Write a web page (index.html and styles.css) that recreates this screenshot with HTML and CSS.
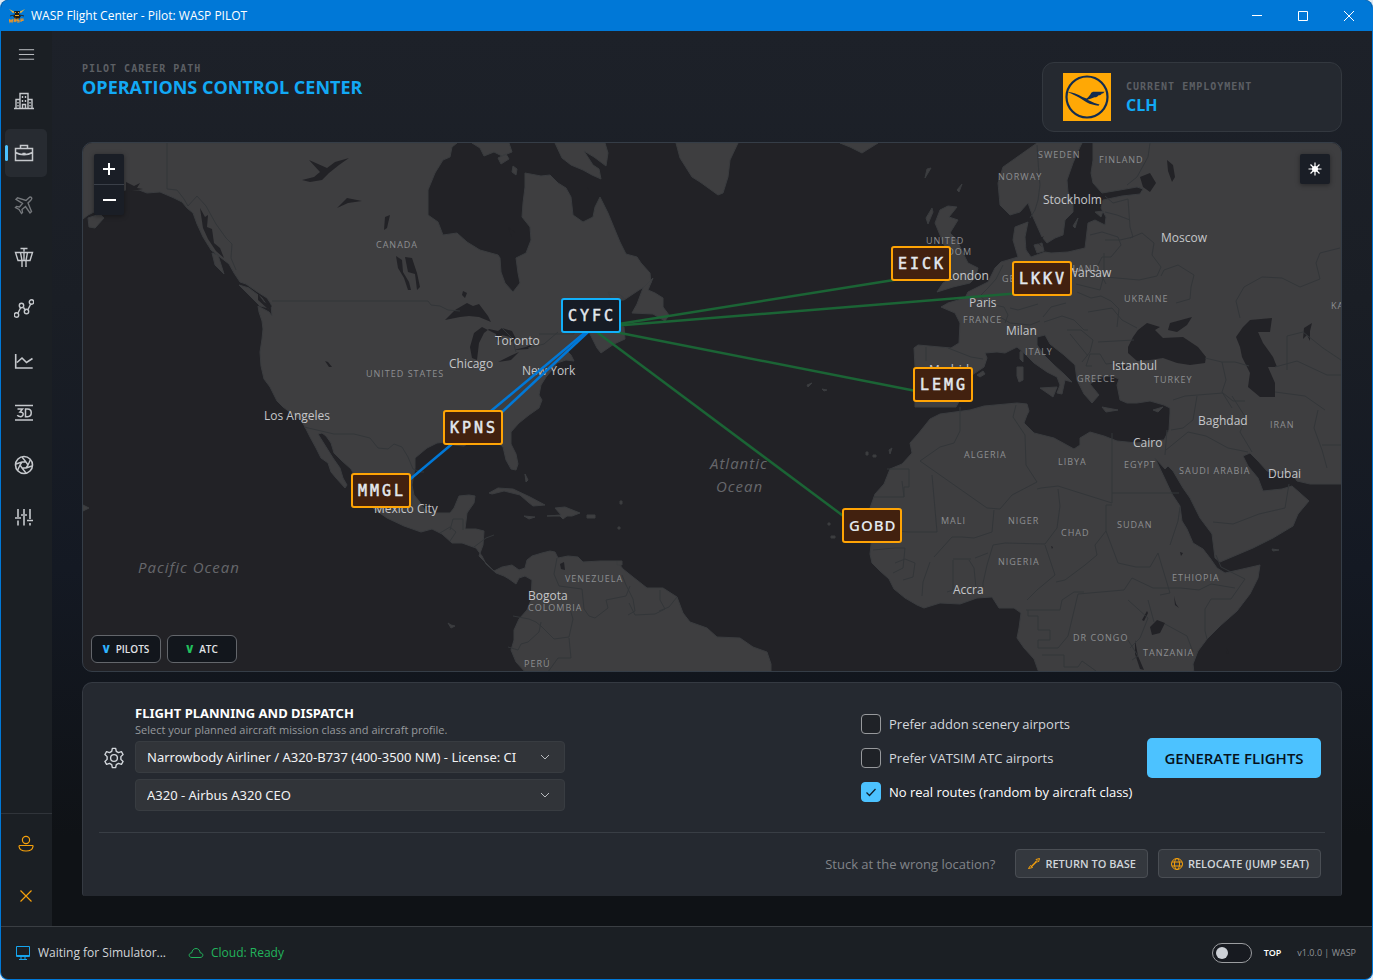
FILE: index.html
```html
<!DOCTYPE html>
<html lang="en">
<head>
<meta charset="utf-8">
<title>WASP Flight Center - Pilot: WASP PILOT</title>
<link rel="stylesheet" href="styles.css">
</head>
<body>
<div class="window">
  <header class="titlebar">
    <svg class="app-logo" viewBox="0 0 16 16" aria-hidden="true">
      <path d="M0 1l6 3-2 1zM16 1l-6 3 2 1z" fill="#f0b840"/>
      <path d="M5 3h6l-1 3 2 2-2 3H6L4 8l2-2z" fill="#1b1a18"/>
      <path d="M6 4h1v1H6zM9 4h1v1H9zM6 7h4v1H6z" fill="#f5a81c"/>
      <path d="M1 8l4-1M15 8l-4-1" stroke="#2b2a28"/>
      <path d="M0 11l1 3 1-2 1 2 1-3M5 14l1-3 1 3M10 11H8v1.500h2V14H8M12 14v-3h2v1.500h-2" fill="none" stroke="#e8952a" stroke-width="1.200"/>
    </svg>
    <span class="window-title">WASP Flight Center - Pilot: WASP PILOT</span>
    <div class="window-controls">
      <button type="button" aria-label="Minimize"><svg viewBox="0 0 10 10"><path d="M0 4.500h10"/></svg></button>
      <button type="button" aria-label="Maximize"><svg viewBox="0 0 10 10"><path d="M.5.5h9v9h-9z"/></svg></button>
      <button type="button" aria-label="Close"><svg viewBox="0 0 10 10"><path d="M0 0l10 10M10 0L0 10"/></svg></button>
    </div>
  </header>

  <div class="body">
    <nav class="sidebar" aria-label="Main">
      <button type="button" class="menu" aria-label="Menu"><svg viewBox="0 0 20 20"><path d="M2 5.500h16M2 10.500h16M2 15.500h16"/></svg></button>
      <button type="button" class="nav-item" aria-label="Company"><svg viewBox="0 0 20 20"><path d="M0 17.500h20M2 17V8.500h4M18 17V8.500h-4M6 17V2.500h8V17M8.500 17v-3.500h3V17M8.500 5v2M11.500 5v2M8.500 9v2M11.500 9v2M4 11v1.500M4 14v1.500M16 11v1.500M16 14v1.500"/></svg></button>
      <button type="button" class="nav-item active" aria-label="Career"><svg viewBox="0 0 20 20"><path d="M1.500 5.500h17v12h-17zM6.500 5.500v-3h7v3M1.500 9.500c5 3 12 3 17 0M8.500 10.500h3" stroke-width="1.500"/></svg></button>
      <button type="button" class="nav-item dim" aria-label="Flight"><svg viewBox="0 0 20 20"><path d="M17.500 2.500c-1-.8-2-.4-2.800.4L12 5.500 3.500 2.800 2 4.300 8.500 8.500 5.500 12l-3-.6L1.500 12.500 5 14.500l2.500 4 1-1-.5-3 3.500-3 4.500 6.500 1.500-1.500L14 8l2.800-2.700c.8-.8 1.400-1.900.7-2.800z"/></svg></button>
      <button type="button" class="nav-item" aria-label="Tower"><svg viewBox="0 0 20 20"><path d="M6.500 1.500h7M10 1.500v3M1.500 5.500h17L16 13.500H4zM6.500 5.500l1.500 8M13.500 5.500l-1.500 8M10 5.500v8M8 13.500V20M12 13.500V20"/></svg></button>
      <button type="button" class="nav-item" aria-label="Routes"><svg viewBox="0 0 20 20"><path d="M4 14l3-6M9.500 8.500l2 3M14 10.500l3-6"/><circle cx="2.500" cy="16" r="2.200"/><circle cx="7.500" cy="6.500" r="2.200"/><circle cx="12.500" cy="12.500" r="2.200"/><circle cx="17.500" cy="3" r="2.200"/></svg></button>
      <button type="button" class="nav-item" aria-label="Statistics"><svg viewBox="0 0 20 20"><path d="M1.700 3v14h17M3 11.500l5-4.500 4.500 4.500 6-4" stroke-width="1.600"/></svg></button>
      <button type="button" class="nav-item" aria-label="3D view"><svg viewBox="0 0 20 20"><path d="M1 2.500h18M1 17h18M3.500 6h5L6 9c5 0 3.500 5-.2 4.600C4.500 13.600 3.800 13 3.400 12M11.500 6h2c5 0 5 7.700 0 7.700h-2z" stroke-width="1.500"/></svg></button>
      <button type="button" class="nav-item" aria-label="Camera"><svg viewBox="0 0 20 20"><circle cx="10" cy="10" r="8.500" stroke-width="1.600"/><path d="M8 7h4l2 3-2 3H8l-2-3zM12 7L8 2M14 10l2.500-5.500M12 13l6-2M8 13l4 5M6 10l-2.500 5.500M8 7L2 9" stroke-width="1.400"/></svg></button>
      <button type="button" class="nav-item" aria-label="Settings"><svg viewBox="0 0 20 20"><path d="M4 2v8M1 11h6M4 13.500v5M10 2v5M7 8h6M10 9v9.500M16 2v10M13 13.500h6M16 16v2.500" stroke-width="1.600"/></svg></button>
      <div class="nav-bottom">
        <button type="button" class="nav-item accent" aria-label="Account"><svg viewBox="0 0 20 20"><circle cx="10" cy="6" r="3.600"/><path d="M3.500 11.500h13c.5 0 .6.5.5 1-.4 3-3 4.500-7 4.500s-6.600-1.500-7-4.500c0-.5 0-1 .5-1z"/></svg></button>
        <button type="button" class="nav-item accent" aria-label="Exit"><svg viewBox="0 0 20 20"><path d="M4.500 4.500l11 11M15.500 4.500l-11 11"/></svg></button>
      </div>
    </nav>

    <main class="main">
      <div class="page-head">
        <div class="heading">
          <p class="eyebrow">PILOT CAREER PATH</p>
          <h1>OPERATIONS CONTROL CENTER</h1>
        </div>
        <section class="employment">
          <svg class="airline" viewBox="0 0 48 48" role="img" aria-label="Airline logo">
            <path fill="#ffa805" d="M0 0h48v48H0z"/>
            <circle cx="24" cy="24" r="20.500" fill="none" stroke="#122c50" stroke-width="2.200"/>
            <path fill="#122c50" d="M5.500 19c4 .5 9 2 14 5l4 1.500c2-1 3.500-3.500 4.500-5.200.7-1 1.500-1.500 3-1.500h10.500l-1.500 1.700h-2l1 .3-2 1.500h-2l.5.500-2.500 1.400h-1.500l-4 1.500-3 1 7 3.300 5 1.500-1 1.300c-4-.4-8.500-1.700-11.500-3.300-3-1.500-5-3.500-8-5-4-2-7-3.800-10.500-5z"/>
          </svg>
          <div>
            <p class="eyebrow">CURRENT EMPLOYMENT</p>
            <p class="company">CLH</p>
          </div>
        </section>
      </div>

      <section class="map" aria-label="Route map">
        <svg class="map-canvas" viewBox="83 143 1258 528" preserveAspectRatio="xMidYMid slice">
          <g class="land">
            <path d="M83 143V219l5-4 6-3V208l31-18 14 0 8 3 13-1 14 6 8 4 5 6 6 5 4 11 6 13 8 13 9 7 9 7 5 9 6 9 6 2 10 7 11 7 4 6 1 12-3-4-11-6 1 6 3 9 1 8-1 10-2 13 1 14 3 13 6 8 5 10 2 4 6 6 8 6 10 7 4 7 5 10 6 11 5 10 7 5 3 9 5 6 9 10 2-3-4-7-3-10-7-10-5-8-5-8-5-8 4-1 4 3 5 7 3 10 8 8 9 8 10 19 5 10 8 11 13 9 17 8 17 6 11-3 10 5 10 9 10 0 14 5 6 8 4 8 10 9 8 3 5 3 7 5 3-6 6-2 7 4-1 20-4 10-8 9-5 11 0 10-3 10 5 12 10 11H771V664l-4-12-14-5-13-9-23-1-10-9-17-6-7-9-6-16-14-9h-16l-14-11-10-8-6-8h-17l-17 1-5-5-10-1-10 2-3-6-5-1-8 2-10 3-5 4-2 8-6 2-7-5-10 2-8 4-7-7-8-8 4-11 1-14-8-2H465l2-16 7-10 1-7-6-1-10 1-5 12-4 5H435l-10-3-6-9-5-6-2-10 3-17v-10l12-10 10-5 9-1 8 3 10 1 5-3 28-1 6 5 3 13 5 9 5 1 2-6-2-10-5-10V432l8-9 10-8 10-7 3-8-3-5 2-10 5-8 6-7 5-7 9-3 8 1-3-6-4-4 7-9 7-5 8-5 4 8 4 8 4 5 13-9 11-5-1-12-16-3-16-6-3-8 1-8 34-2 15-10 12-7-1-10-9-10-4-6-11-3-6-12-5-12-7-17-8-16-5 10-2 10-10 5-10-7-2-18-5-9-8-5-8-8-9 1-16-3 0 14-2 16-1 14 8 10 1 13-5 13-10 5 2 15 2 10-7 9-8-9-4-11-1-14-2-3-18-5-13-8-10-9-14 2-5-13-10-7V190l7-17 8-13 7-3 2-10 5-4z"/>
            <path d="M212 253l6 2 6 19-9-9zM239 285l10 3 13 10 7 10-9-2-11-11zM88 218l12-4 4 4-9 10-6-1zM555 143l7 15 9 7 12 5 9 5 9 4-2-10-6-4-9-14 10 6 8 6 4 3 2-13-3-10zM472 143l8 5 4 8 10-4 8 4 10-4-3-9zM498 158l8-4 3 5-8 5zM513 166l4 3-1 6-4-3zM653 278l-5 12 7 3 8 5v9l6 8-4 6-12-7-21-1 5-9 6-16zM608 292l12 3 5 4-13 1zM676 143l4 15 12 19 8 5 18 13 5-2 5-16 2-17 8-17zM840 143l10 4 12 6 16-10z"/>
            <path d="M489 493l9-5 15 1 17 8 15 8-12 1-5-4-8-7-16-4-12 3zM547 516l14-1-6-7 10-1 15 6-8 3-5 0-4 3-3-3zM524 516l11 1-6 2zM587 515h8v3h-8zM525 474l3 6-2 2zM83 505l6 3-6 3zM620 501h2v3h-2zM618 527h2v2h-2zM617 561h5v4h-5zM448 623l3 2 4 1-4 2zM807 385l5-2-4 4zM822 389l5 1-3 1zM866 452h2v3h-2zM873 455h3v2h-3zM889 450l3-2-2 6zM828 523h2v2h-2zM831 536h4v2h-4z"/>
            <path d="M1037 143l-17 12-17 12-5 16 2 22 10 10 10-3 8-9 5 14 9 20 5 6 8-5 8-3 2-15 8-8v-9l-5-11-1-12 6-17 7-16 2-4z"/>
            <path d="M935 223l5-13 8-4 9 1-8 10 9 3-8 13 7 7 6 13 5 10 10 5-3 10-5 5-17 4-16 5 6-9 8-5-5-9-3-10 2-12zM926 218l6-10 1 4-5 12zM931 168l-6 10 2-9zM962 184l-3 8-2-2z"/>
            <path d="M1017 367l6 0 0 13-4 2-2-6zM1020 352l3-2 0 12-3-3zM1040 388l17-1-4 10zM1102 407l16 3-12 2zM1153 410l10-3-5 5zM1034 245l8-2 2 8-7 2zM1073 226l5-8-3 10zM1095 212l8-1-2 6zM977 375l6-4 2 3-5 3zM1272 549l7 1-6 1z"/>
            <path d="M1341 143H1093v17l-2 13 2 10 9 10 18-3 17-3 6 2-3 5-18 2-19 4-2 8 5 9-1 8-10-5-7 3-2 17-1 8-17 4-17 1-6-1-14 5-5-7-1-13 3-15-13 5-2 13 5 17-17 5-6 6-7 14-10 5-10 5-3 6-17 5-7 4 14 6 5 10-1 20-8 5-33-3-4 3 1 19v40l16 0 25 0 14-25 2-7 12-8 3-9-2-5 12-1 8 1 12-6 7 6 10 10 13 9 10 5 3 8-3 8 5 1 3-14 7 2-8-8-10-9-10-10-7-10v-8l8-2 5 9 14 11 11 10 2 15 7 14 8 9 7-8-9-11 10-7 12-1 7 3-2 6 3 15 7 3h10l13-2 14 4 6 3v5l-1 17-5 10-14 1-13 2-20-2-13-5-14-4-10 6v7l-6 4-20-11-20-5-10-10 3-8 2-4-2-7-10-1-33 3-14 4-30 4-10 5-12 15-8 9 2 10-10 11-12 5-6 15-9 10-5 14 4 10-4 36 2 9 8 8 9 8 5 10 11 9 12 7 7 3 16-5 20 1 17-6 15-1 7 11h15l7 5-2 15-2 10 7 10 10 11 5 14 3 9H1195l-2-18 5-13 9-12 13-13 17-15 13-17 8-16 2-13-13 3-22 5-8-5-7-10-7-9-10-6-6-14-5-8-2-15-8-12-7-15-10-21 10 11 3-3 5 5 10 17 7 10 10 20 12 16 3 24 5 4 33-14 20-10 20-12 5-12 11-13-9-8-8-7-10 3-19 2-5-13-10-12-5-10 7-3 8 8 9 10 16 3 9-1 5 8 13 3h31z"/>
          </g>
          <g class="water">
            <path d="M302 180l12-3 6-5-11-12 18 8 8-6 14-4-10 7-10 8-7 7-12 2zM337 208l10-10 15 3-14 2zM384 230l1-13 5-2-3 13zM405 257l7 1 5 15 3 14-3 3-2-16-7-2zM396 256l6 4 1 12 6 10 2 8-3 0-4-12-6-10zM463 291l4 2-2 5-3-3zM445 320l10-10 12-7 6 3 6-2 9 12 3 6-12-5-10-1-9 1zM482 327l-8 6-4 14 2 11 5 2 2-17 5-10 5-4 9 2 4-3 10 3 4 8-6 4 0-6-8-2-4 9-2-10zM498 362l12-6 9-4-8 8zM514 350l12-3 8-4-6 6zM325 361l3 1 4 5-3 0zM560 564l4-2 1 8-4-1zM587 187l2 3-2 2zM508 227l8 6-4 4z"/>
            <path d="M1128 353v-6l5-10 5-7 9-7 13 4-5 3 8 8 20-1 15 10 8 10-1 6-15 2-13-2-14-5-13 2-13 1zM1168 330l2-7 22-6-5 8-10 7zM1250 320l22-2-2 14-12 0 5 11 10 14 4 10-9 0 7 16v14h-15l-12-10 2-14-8-16-2-10-4-10 7-10zM1140 177l10-4 6 10-6 9-7-5zM1167 160l6 5 2 12-3 5-4-11zM1304 328l8-5-2 8 0 10-3-6-4 4zM1117 366l7-1 5 2-8 2zM1150 627l7-7 8 3-5 10-8 2zM1135 640l3 16 6 14-4-1-5-15zM1142 620l5-9 1 2-4 8zM1174 596l2 8 3 4-4-3zM1180 552l3 1-2 3zM1051 546l2 1-1 2zM1226 647l3 6-2 1z"/>
            <path d="M200 208l5 9 3-2-1 12 5 2 2 14 6 5 4 10-8-7-8-12-5-11zM258 294l6 8 8 4-4 3-10-9zM126 182l8 4 6-3-3 5 6 1-17 3zM1026 247l6-2-2 5zM1044 236l-5 7 3 4-6-6z"/>
          </g>
          <g class="borders">
            <path d="M167 143v46l10 1 7 9 4 7 9-10 9 10 10 18 10 14 6 6-1 14 5 12M272 301H428l3 4 9 1 8 4 12 1M502 328l10 10 4 14M528 348l16-4 14-12M539 334h35l1-6M304 427l30 7h20l16 4 8 10 10 1 6-5 8 3 6 10 5 12 8 3 3 0M450 530l3-11h10v11M440 533l10-6 6 5-6 9M474 547l12-9 8-3M557 558l-3 16 5 12 23 3 2 20 5 7 6 2 13-10-2-8 20-4 4-10M622 575l4 10 7 14 2 12-7 4M660 590v10l5 9-10 5-20 1-6-12M677 597l-8 10-10 4M513 616l16 3 7 3 6 5 12 12 15-2 4-18-3-10M541 622l-2 10-11 10-7 2-3 6-10-3M569 638l2 20-13 0-10 14"/>
            <path d="M1037 145l2 30 1 10-2 15-3 10-5 8M1150 143l-2 14-11 20-10 8M1105 196l8 7 15-4 2 28 3 10-13 3-15 0M1105 212l12 3 13 5M1090 235l12-3 16 5 3 8-10 12-9 0-5 10 9 17M1130 238l12-5 12 10-2 12 9 12-4 9-18 4-22-2-12-1M1161 276l3-6 14-5 16 10-3 12-1 12-14 4M1104 253v22l-4 15-24-6M1077 292l14 6 10-2 10 5 8 8-2 18M1072 290l-19-4M1052 262l-5 18M1003 265l-7 14-8 9-8 8 9 8 15 3 4 8-3 8M1000 317l10 6 20 2 10-4M1010 308l8 2 20-6M1066 303l-15 4-8 10M1044 322l18-6 12 4 10 10 4 0M1088 312l24-4 10 12 15 8M1067 330l14 0 12 10-3 12-8 10M1070 334l18 22M1098 342l36-2M1090 354h10l6 10 18-2M1090 354l-4 12 6 0M983 359l-12-2-23-9M926 347l0 14M1240 318l-4-17 8-14 18-10 20 1 18 9 20-8-4-16 4-10 20-5M1205 358l17 4 13 0 14 4M1222 362l4 18-4 12 10 16M1173 400l12-4 38-3 10 8 12 0M1287 370v-34l16-4 20 16 18 12M1275 367l22-6 30 14 14 0M1275 392l30 4 20 14M1232 396l14 22-6 14 12 20M1171 430l12-2 10-8 4-24M1166 450l22-18 18 4 22 12 20 4M1318 410l-4 18 8 22 5 18M1322 445h19M1167 430l-2 25"/>
            <path d="M920 461l20-14 14-4 6-12 0-24M1016 405l-3 12 12 18 1 30 11 17-25 13-12 14-13-1-67-47M887 469h22v18h-5v10h-30M904 497l-2-16M932 475l5 57h-29l-34-3M1112 433v70l-54-17-17 2-4 1M1112 493h67M1112 505h-6v26l-11 14 2 10-12 10-20 15-9 2M1058 489l2 17-3 22-12 16M1045 544l-40-1-12 2-6 20-4 18v4M994 510l-2 22-18 6-12-1-10 0-18 20M873 550l22-2 10 0-2 20-10 5M895 563l10-4 10 4-2 14-10 3M930 562l-7 20-1 14M953 560v30l-6 2M969 560l5 8 2 20M953 559h18M975 558l13-5M1045 545l10 30-18 15-10 10M1026 610h34l2-10 12-8 10 0M1028 610v6h10v14h12v10h-12v8h20l10-12 10-42 46-4 8-12 21 10h28l18 2 12-6 24 4M1106 531l12 32 18 4 14 0 8-14 6 20 6 20-10 2M1170 545l8-24 2-14M1216 555l5 12 24 12-14 20-20 0-6 10v22l2 8M1148 600l6 22M1128 600l20 18-8 20-10 10M1165 624l22 12 6 16M1128 640l10 16-6 4M1042 655h22v12h14l4-6 14 10M1213 522l20 2 26-10 26-6 4-24"/>
          </g>
          <g class="country">
            <text x="376" y="248">CANADA</text><text x="366" y="377">UNITED STATES</text><text x="565" y="582">VENEZUELA</text><text x="528" y="611">COLOMBIA</text><text x="524" y="667">PERÚ</text>
            <text x="1038" y="158">SWEDEN</text><text x="1099" y="163">FINLAND</text><text x="998" y="180">NORWAY</text><text x="926" y="244">UNITED</text><text x="922" y="255">KINGDOM</text><text x="1002" y="282">GERMANY</text><text x="1058" y="272">POLAND</text><text x="1124" y="302">UKRAINE</text><text x="963" y="323">FRANCE</text><text x="1025" y="355">ITALY</text><text x="1077" y="382">GREECE</text><text x="1154" y="383">TURKEY</text><text x="1331" y="309">KAZAKHSTAN</text><text x="1270" y="428">IRAN</text><text x="964" y="458">ALGERIA</text><text x="1058" y="465">LIBYA</text><text x="1124" y="468">EGYPT</text><text x="1179" y="474">SAUDI ARABIA</text><text x="941" y="524">MALI</text><text x="1008" y="524">NIGER</text><text x="1061" y="536">CHAD</text><text x="1117" y="528">SUDAN</text><text x="998" y="565">NIGERIA</text><text x="1172" y="581">ETHIOPIA</text><text x="1073" y="641">DR CONGO</text><text x="1143" y="656">TANZANIA</text>
          </g>
          <g class="city">
            <text x="495" y="345">Toronto</text><text x="449" y="368">Chicago</text><text x="522" y="375">New York</text><text x="264" y="420">Los Angeles</text><text x="374" y="513">Mexico City</text><text x="528" y="600">Bogota</text><text x="1043" y="204">Stockholm</text><text x="1161" y="242">Moscow</text><text x="946" y="280">London</text><text x="1067" y="277">Warsaw</text><text x="969" y="307">Paris</text><text x="1006" y="335">Milan</text><text x="1112" y="370">Istanbul</text><text x="929" y="374">Madrid</text><text x="1198" y="425">Baghdad</text><text x="1133" y="447">Cairo</text><text x="1268" y="478">Dubai</text><text x="953" y="594">Accra</text>
          </g>
          <g class="ocean"><text x="138" y="573">Pacific Ocean</text><text x="710" y="469">Atlantic</text><text x="716" y="492">Ocean</text></g>
          <g class="routes"><path d="M600 327L900 279"/><path d="M600 327L1020 293"/><path d="M600 329L916 391"/><path d="M590 327L846 518"/></g>
          <g class="routes return"><path d="M588 330L491 411"/><path d="M588 332L501 413"/><path d="M452 444L408 481"/></g>
          <g class="marker home"><rect x="562" y="299" width="58" height="33" rx="2"/><text x="568" y="321">CYFC</text></g>
          <g class="marker"><rect x="444" y="411" width="58" height="33" rx="2"/><text x="450" y="433">KPNS</text></g>
          <g class="marker"><rect x="352" y="474" width="58" height="33" rx="2"/><text x="358" y="496">MMGL</text></g>
          <g class="marker"><rect x="892" y="247" width="58" height="33" rx="2"/><text x="898" y="269">EICK</text></g>
          <g class="marker"><rect x="1013" y="262" width="58" height="33" rx="2"/><text x="1019" y="284">LKKV</text></g>
          <g class="marker"><rect x="914" y="368" width="58" height="33" rx="2"/><text x="920" y="390">LEMG</text></g>
          <g class="marker sans"><rect x="843" y="509" width="58" height="33" rx="2"/><text x="849" y="531">GOBD</text></g>
        </svg>
        <div class="zoom">
          <button type="button" aria-label="Zoom in"><svg viewBox="0 0 14 14"><path d="M1 7h12M7 1v12"/></svg></button>
          <button type="button" aria-label="Zoom out"><svg viewBox="0 0 14 14"><path d="M1 7h13"/></svg></button>
        </div>
        <button type="button" class="theme" aria-label="Map theme"><svg viewBox="0 0 14 14"><circle cx="7" cy="7" r="3" fill="currentColor" stroke="none"/><path d="M7 0.500v13M.5 7h13M2.500 2.500l9 9M11.500 2.500l-9 9" stroke-width="1.200"/></svg></button>
        <div class="layers">
          <button type="button"><b class="v-pilots">V</b>PILOTS</button>
          <button type="button"><b class="v-atc">V</b>ATC</button>
        </div>
      </section>

      <section class="panel">
        <div class="planning">
          <svg class="gear" viewBox="0 0 24 24" aria-hidden="true"><circle cx="12" cy="12" r="3.700"/><path d="M10.200 1.500h3.600l.7 3.200 2.400 1.400 3.200-1 1.800 3.100-2.400 2.300v3l2.400 2.300-1.800 3.100-3.200-1-2.400 1.400-.7 3.200h-3.600l-.7-3.200-2.400-1.400-3.200 1-1.800-3.100 2.400-2.300v-3L2.100 8.200l1.800-3.100 3.200 1 2.400-1.400z"/></svg>
          <div class="profile">
            <h2>FLIGHT PLANNING AND DISPATCH</h2>
            <p class="hint">Select your planned aircraft mission class and aircraft profile.</p>
            <div class="select"><select aria-label="Mission class"><option>Narrowbody Airliner / A320-B737 (400-3500 NM) - License: CI</option></select><svg viewBox="0 0 10 10"><path d="M1 3l4 4 4-4"/></svg></div>
            <div class="select"><select aria-label="Aircraft profile"><option>A320 - Airbus A320 CEO</option></select><svg viewBox="0 0 10 10"><path d="M1 3l4 4 4-4"/></svg></div>
          </div>
          <div class="checks">
            <label><input type="checkbox"><span>Prefer addon scenery airports</span></label>
            <label><input type="checkbox"><span>Prefer VATSIM ATC airports</span></label>
            <label class="on"><input type="checkbox" checked><span>No real routes (random by aircraft class)</span><svg class="tick" viewBox="0 0 12 12"><path d="M1.500 6.500l3 3 6-6.500"/></svg></label>
          </div>
          <button type="button" class="generate">GENERATE FLIGHTS</button>
        </div>
        <div class="stuck">
          <span>Stuck at the wrong location?</span>
          <button type="button" class="secondary"><svg viewBox="0 0 14 14"><path d="M4.500 9.500l5-5" stroke-width="1.400"/><path d="M1.500 11.500l2-3 2 2zM9 2.500l3.500-1L11.500 5zM8.500 4l1.500 1.500"/></svg>RETURN TO BASE</button>
          <button type="button" class="secondary"><svg viewBox="0 0 14 14"><circle cx="7" cy="7" r="5.500"/><ellipse cx="7" cy="7" rx="2.500" ry="5.500"/><path d="M2 5h10M2 9h10"/></svg>RELOCATE (JUMP SEAT)</button>
        </div>
      </section>
    </main>
  </div>

  <footer class="status">
    <span class="sim"><svg viewBox="0 0 16 16"><path d="M1.500 1.500h13v10h-13zM1.500 10.500h13M6 12v2.500M10 12v2.500M4 14.500h8"/></svg>Waiting for Simulator...</span>
    <span class="cloud"><svg viewBox="0 0 16 16"><path d="M4 12.500C1.800 12.500 1 11 1.200 9.800 1.400 8.600 2.400 7.900 3.800 7.800 4 5.200 5.800 3.500 8 3.500s4 1.700 4.200 4.300c1.400.1 2.400.8 2.600 2 .2 1.200-.6 2.700-2.800 2.700z"/></svg>Cloud: Ready</span>
    <label class="top"><input type="checkbox" role="switch">TOP</label>
    <span class="version">v1.0.0 | WASP</span>
  </footer>
</div>
</body>
</html>
```
FILE: styles.css
```css
* { box-sizing: border-box; }
body {
  margin: 0;
  background: #dfe9f2;
  color: #d3d7dc;
  font: 13px/18px "Open Sans", "Noto Sans", sans-serif;
}
p, h1, h2 { margin: 0; }
button { margin: 0; padding: 0; border: 0; background: none; color: inherit; font: inherit; cursor: pointer; }
svg { fill: none; stroke: currentColor; }

.window {
  display: flex;
  flex-direction: column;
  min-height: 100vh;
  overflow: hidden;
  border: 1px solid #0078d7;
  border-top: 0;
  border-radius: 8px;
  background: #1b1f24;
}

/* title bar */
.titlebar { display: flex; align-items: center; height: 31px; padding-left: 8px; background: #0078d7; color: #fff; font-size: 12px; }
.app-logo { width: 16px; height: 16px; margin-right: 6px; stroke: none; }
.window-title { flex: 1; }
.window-controls { display: flex; }
.window-controls button { width: 46px; height: 31px; }
.window-controls svg { display: block; width: 10px; height: 10px; margin: 0 auto; }

.body { display: flex; flex: 1; }

/* sidebar */
.sidebar { display: flex; flex-direction: column; gap: 4px; width: 51px; padding: 4px 4px 0; background: #1b1f24; color: #c5c8cc; }
.sidebar svg { display: block; width: 20px; height: 20px; margin: 0 auto; }
.menu { height: 38px; }
.menu svg { width: 19px; }
.nav-item { position: relative; width: 42px; height: 48px; padding-right: 4px; border-radius: 5px; }
.sidebar .nav-item svg { stroke-width: 1.4; }
.nav-item.active { background: #272b31; }
.nav-item.active::before { content: ""; position: absolute; left: 0; top: 16px; width: 3px; height: 16px; border-radius: 2px; background: #4cc2ff; }
.nav-item.dim { color: #74777b; }
.nav-bottom { display: flex; flex-direction: column; gap: 4px; margin: auto -4px 0; padding: 6px 4px 6px; border-top: 1px solid #30343a; color: #f5a00c; }
.nav-bottom .nav-item { padding-right: 0; }
.nav-bottom .nav-item svg { stroke-width: 1.2; }

/* main column */
.main {
  display: flex;
  flex: 1;
  flex-direction: column;
  gap: 10px;
  min-width: 0;
  padding: 31px 30px 30px;
  background: linear-gradient(#1d2129, #1a1e25 30%, #141923 60%, #0f1216 90%);
}
.page-head { display: flex; justify-content: space-between; height: 70px; }
.eyebrow { color: #5c5f64; font: bold 10px/14px "DejaVu Sans Mono", monospace; letter-spacing: 1px; }
h1 { color: #12a9f5; font-size: 18px; line-height: 22px; font-weight: 700; }
.employment { display: flex; align-items: center; gap: 15px; width: 300px; padding: 0 20px; border: 1px solid #33383f; border-radius: 12px; background: #252930; }
.employment .eyebrow { line-height: 16px; }
.airline { width: 48px; height: 48px; stroke: none; }
.company { color: #12a9f5; font-size: 16px; line-height: 20px; font-weight: 700; }

/* map */
.map { position: relative; flex: 1; min-height: 400px; overflow: hidden; border: 1px solid #353d47; border-radius: 10px; background: #222226; }
.map-canvas { position: absolute; inset: 0; width: 100%; height: 100%; stroke: none; }
.land { fill: #3e3e40; stroke: #3a3c3f; }
.water { fill: #222226; }
.borders { stroke: #333639; stroke-linejoin: round; fill: none; }
.routes { stroke: #1b6435; stroke-width: 2.5; }
.routes.return { stroke: #0078d7; stroke-width: 2.5; }
.country { fill: #8d8e91; font-size: 9px; letter-spacing: 1px; }
.city { fill: #c5c6c9; font-size: 12px; }
.ocean { fill: #66676b; font-size: 15px; font-style: italic; letter-spacing: 1px; }
.marker rect { fill: #42210f; stroke: #ffa405; stroke-width: 2; }
.marker text { fill: #e3e8ee; stroke: #e3e8ee; stroke-width: .5; font: 15px "DejaVu Sans Mono", monospace; letter-spacing: 3px; }
.marker.home rect { fill: #161c25; stroke: #12b0fa; }
.marker.sans text { stroke: none; font: 600 15px "Open Sans", sans-serif; letter-spacing: 1px; }

.zoom, .theme, .layers { position: absolute; }
.zoom { top: 11px; left: 11px; display: flex; flex-direction: column; border-radius: 2px; background: #1a1e26; color: #fff; box-shadow: 0 1px 5px rgba(0, 0, 0, .4); }
.zoom button, .theme { width: 30px; height: 30px; }
.zoom button + button { border-top: 1px solid #3a3f48; height: 31px; }
.zoom svg, .theme svg { display: block; width: 14px; height: 14px; margin: 0 auto; }
.zoom svg { stroke-width: 2; }
.theme { top: 11px; right: 11px; border-radius: 2px; background: #1a1e26; color: #fff; box-shadow: 0 1px 5px rgba(0, 0, 0, .4); }
.layers { left: 8px; bottom: 8px; display: flex; gap: 6px; }
.layers button { width: 70px; height: 28px; border: 1px solid #63666b; border-radius: 6px; background: #12161c; color: #e1e4e8; font-size: 10px; font-weight: 600; }
.layers b { margin-right: 6px; }
.v-pilots { color: #2fb4ff; }
.v-atc { color: #22c05c; }

/* dispatch panel */
.panel { padding: 0 16px; border: 1px solid #353a42; border-bottom: 0; border-radius: 10px 10px 3px 3px; background: #252930; }
.planning { display: flex; align-items: center; gap: 10px; padding: 21px 4px; border-bottom: 1px solid #393e45; }
.gear { width: 22px; height: 22px; stroke-width: 1.5; stroke-linejoin: round; }
.profile { display: flex; flex-direction: column; width: 430px; }
h2 { margin-bottom: 1px; color: #fff; font: 700 13px/18px "Noto Sans", sans-serif; }
.hint { margin-bottom: 4px; color: #96999d; font-size: 11px; line-height: 14px; }
.select { position: relative; }
.select + .select { margin-top: 6px; }
.select select { appearance: none; width: 100%; height: 32px; padding: 0 32px 0 11px; border: 1px solid #383c41; border-radius: 4px; background: #313439; color: #f1f2f4; font: 13px "Noto Sans", sans-serif; }
.select svg { position: absolute; right: 15px; top: 11px; width: 10px; height: 10px; color: #b8bbbf; pointer-events: none; }
.checks { display: flex; flex-direction: column; gap: 14px; width: 276px; margin-left: auto; white-space: nowrap; }
.checks label { position: relative; display: flex; align-items: center; gap: 8px; height: 20px; }
.checks input { appearance: none; flex: none; width: 20px; height: 20px; margin: 0; border: 1px solid #97999c; border-radius: 4px; background: #1f2227; }
.checks input:checked { border-color: #4cc2ff; background: #4cc2ff; }
.checks .on { color: #fff; }
.tick { position: absolute; left: 4px; top: 4px; width: 12px; height: 12px; color: #10202c; stroke-width: 1.3; pointer-events: none; }
.generate { width: 174px; height: 40px; border-radius: 5px; background: #4cc2ff; color: #06121b; font-size: 15px; font-weight: 600; }
.stuck { display: flex; align-items: center; justify-content: flex-end; gap: 10px; padding: 16px 4px 18px; color: #818489; }
.stuck span { margin-right: 10px; }
.secondary { display: flex; align-items: center; gap: 4px; height: 29px; padding: 0 11px; border: 1px solid #4a4e54; border-radius: 4px; background: #34383e; color: #d0d5da; font-size: 11px; font-weight: 600; }
.secondary svg { width: 14px; height: 14px; color: #f5a00c; }

/* status bar */
.status { display: flex; align-items: center; height: 53px; padding: 0 16px 0 14px; border-top: 1px solid #3a3e43; color: #d3d6da; font-size: 12px; }
.status svg { width: 16px; height: 16px; }
.status span { display: flex; align-items: center; gap: 7px; }
.sim svg { color: #16a5ee; }
.cloud { margin-left: 22px; color: #22b45c; font-weight: 500; }
.top { display: flex; align-items: center; gap: 12px; margin-left: auto; color: #fff; font-size: 9px; font-weight: 600; }
.top input { appearance: none; width: 40px; height: 20px; margin: 0; padding: 3px; border: 1px solid #9b9da0; border-radius: 10px; background: #171a20; }
.top input::before { content: ""; display: block; width: 12px; height: 12px; border-radius: 50%; background: #ccd0d6; }
.status .version { margin-left: 16px; color: #909397; font-size: 9px; }
```
